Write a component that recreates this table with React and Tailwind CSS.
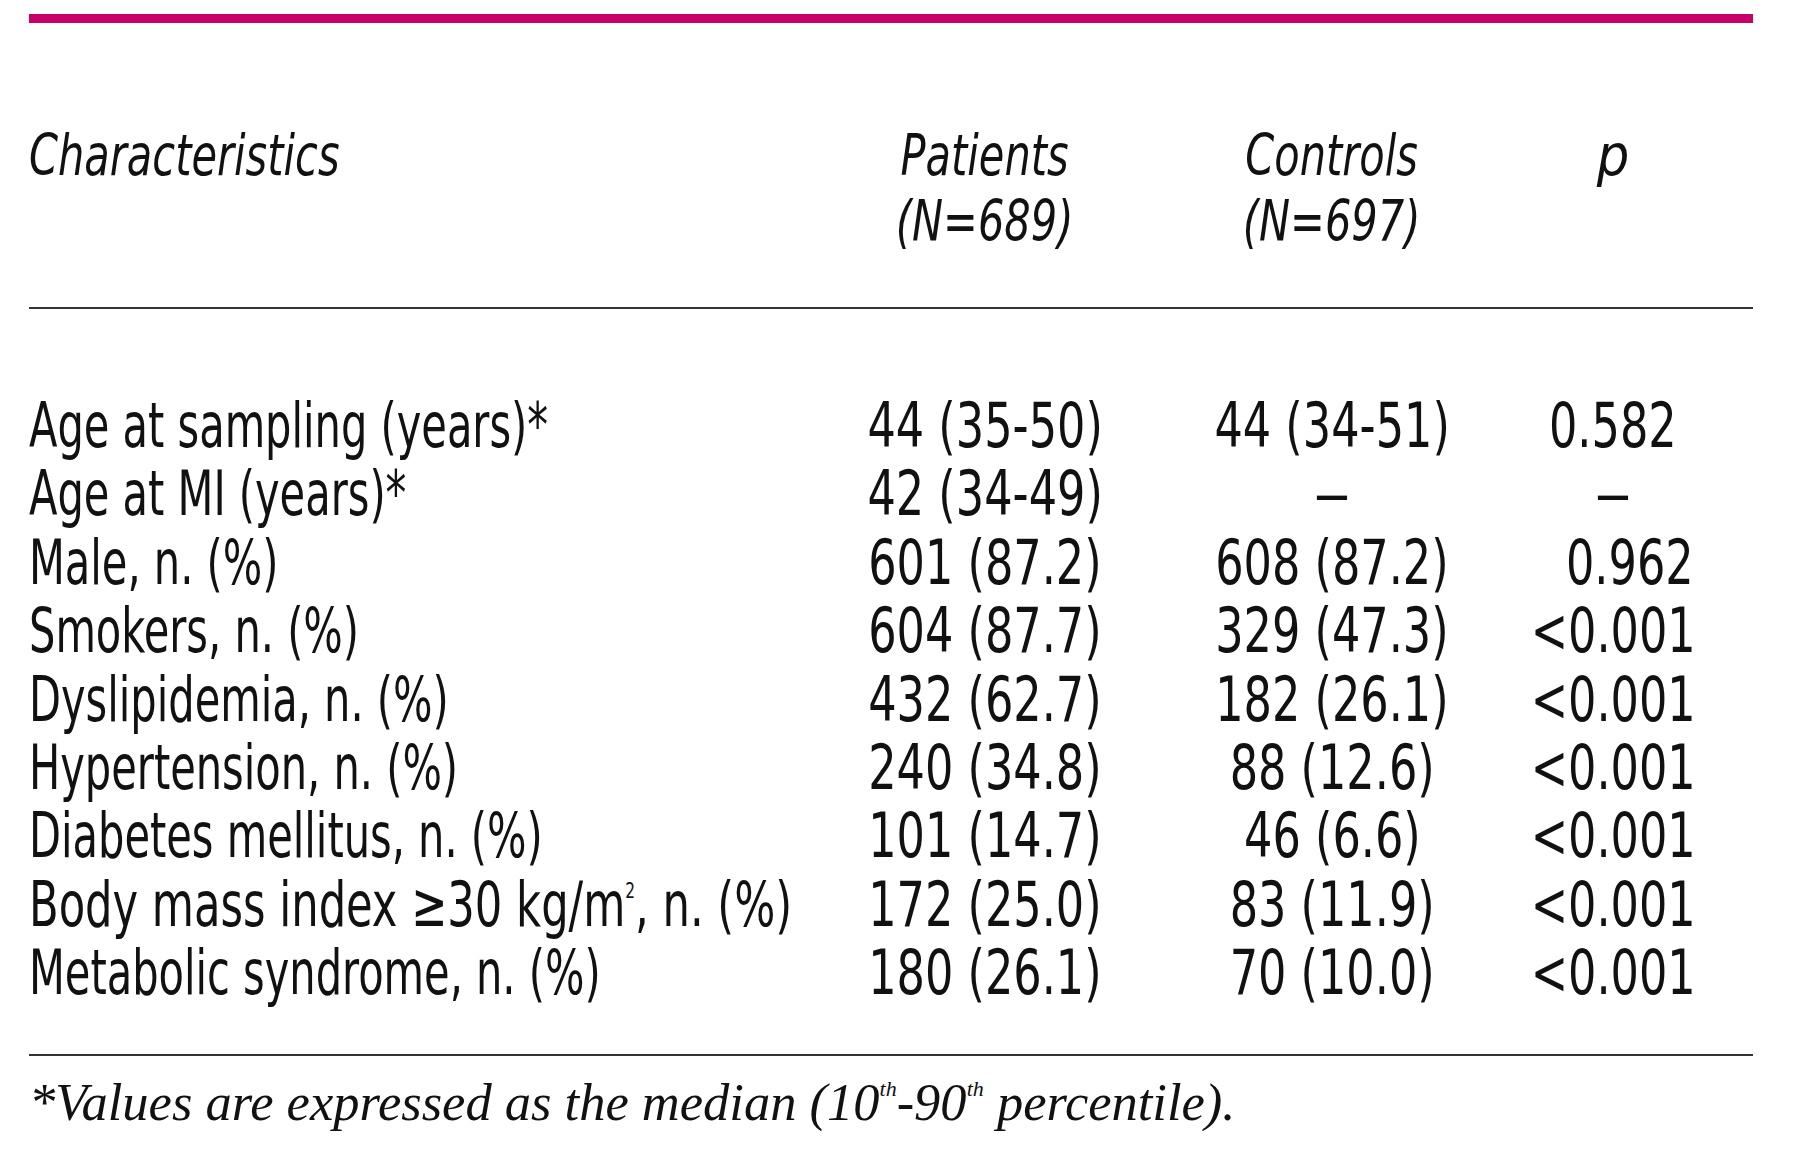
const rows = [
  ["Age at sampling (years)*", "44 (35-50)", "44 (34-51)", "0.582"],
  ["Age at MI (years)*", "42 (34-49)", "—", "—"],
  ["Male, n. (%)", "601 (87.2)", "608 (87.2)", "0.962"],
  ["Smokers, n. (%)", "604 (87.7)", "329 (47.3)", "<0.001"],
  ["Dyslipidemia, n. (%)", "432 (62.7)", "182 (26.1)", "<0.001"],
  ["Hypertension, n. (%)", "240 (34.8)", "88 (12.6)", "<0.001"],
  ["Diabetes mellitus, n. (%)", "101 (14.7)", "46 (6.6)", "<0.001"],
  ["BMI", "172 (25.0)", "83 (11.9)", "<0.001"],
  ["Metabolic syndrome, n. (%)", "180 (26.1)", "70 (10.0)", "<0.001"],
];

const narrow = {
  fontFamily: '"DejaVu Sans Condensed", "DejaVu Sans", "Liberation Sans", sans-serif',
};

const Label = ({ text }) => {
  if (text === "BMI") {
    return (
      <span className="inline-block origin-left scale-x-[0.775]">
        Body mass index ≥30 kg/m
        <sup className="text-[22px] -top-[28px]">2</sup>, n. (%)
      </span>
    );
  }
  return <span className="inline-block origin-left scale-x-[0.745]">{text}</span>;
};

const Value = ({ text, extra = "" }) => (
  <div className={"text-center " + extra}>
    {text === "—" ? (
      <span className="inline-block scale-x-[0.6]">{text}</span>
    ) : (
      <span className="inline-block scale-x-[0.8]">{text}</span>
    )}
  </div>
);

export default function App() {
  return (
    <div className="w-[1800px] h-[1173px] bg-white text-[#111] overflow-hidden">
      <div className="pt-[14px] pl-[29px] w-[1753px]">
        <div className="h-[9px] bg-[#c8006a]" />

        {/* header */}
        <div
          className="mt-[99px] grid grid-cols-[781px_350px_344px_218px] italic text-[57px] leading-[66px]"
          style={narrow}
        >
          <div>
            <span className="inline-block origin-left scale-x-[0.81]">Characteristics</span>
          </div>
          <div className="text-center">
            <span className="inline-block scale-x-[0.81]">
              Patients
              <br />
              (N=689)
            </span>
          </div>
          <div className="text-center">
            <span className="inline-block scale-x-[0.81]">
              Controls
              <br />
              (N=697)
            </span>
          </div>
          <div className="text-center">p</div>
        </div>

        <div className="mt-[53px] h-[2px] bg-[#333]" />

        {/* body */}
        <div className="mt-[83px] text-[62px] leading-[68.4px]" style={narrow}>
          {rows.map((r) => (
            <div
              key={r[0]}
              className="grid grid-cols-[781px_350px_344px_218px] whitespace-nowrap"
            >
              <div>
                <Label text={r[0]} />
              </div>
              <Value text={r[1]} />
              <Value text={r[2]} />
              <Value text={r[3]} extra={r[3] === "0.962" ? "pl-[34px]" : ""} />
            </div>
          ))}
        </div>

        <div className="mt-[46px] h-[2px] bg-[#333]" />

        <p
          className="mt-[16px] italic text-[52.5px] leading-[60px] whitespace-nowrap"
          style={{ fontFamily: '"Liberation Serif", "Times New Roman", serif' }}
        >
          *Values are expressed as the median (10
          <sup className="text-[22px] -top-[24px]">th</sup>-90
          <sup className="text-[22px] -top-[24px]">th</sup> percentile).
        </p>
      </div>
    </div>
  );
}
